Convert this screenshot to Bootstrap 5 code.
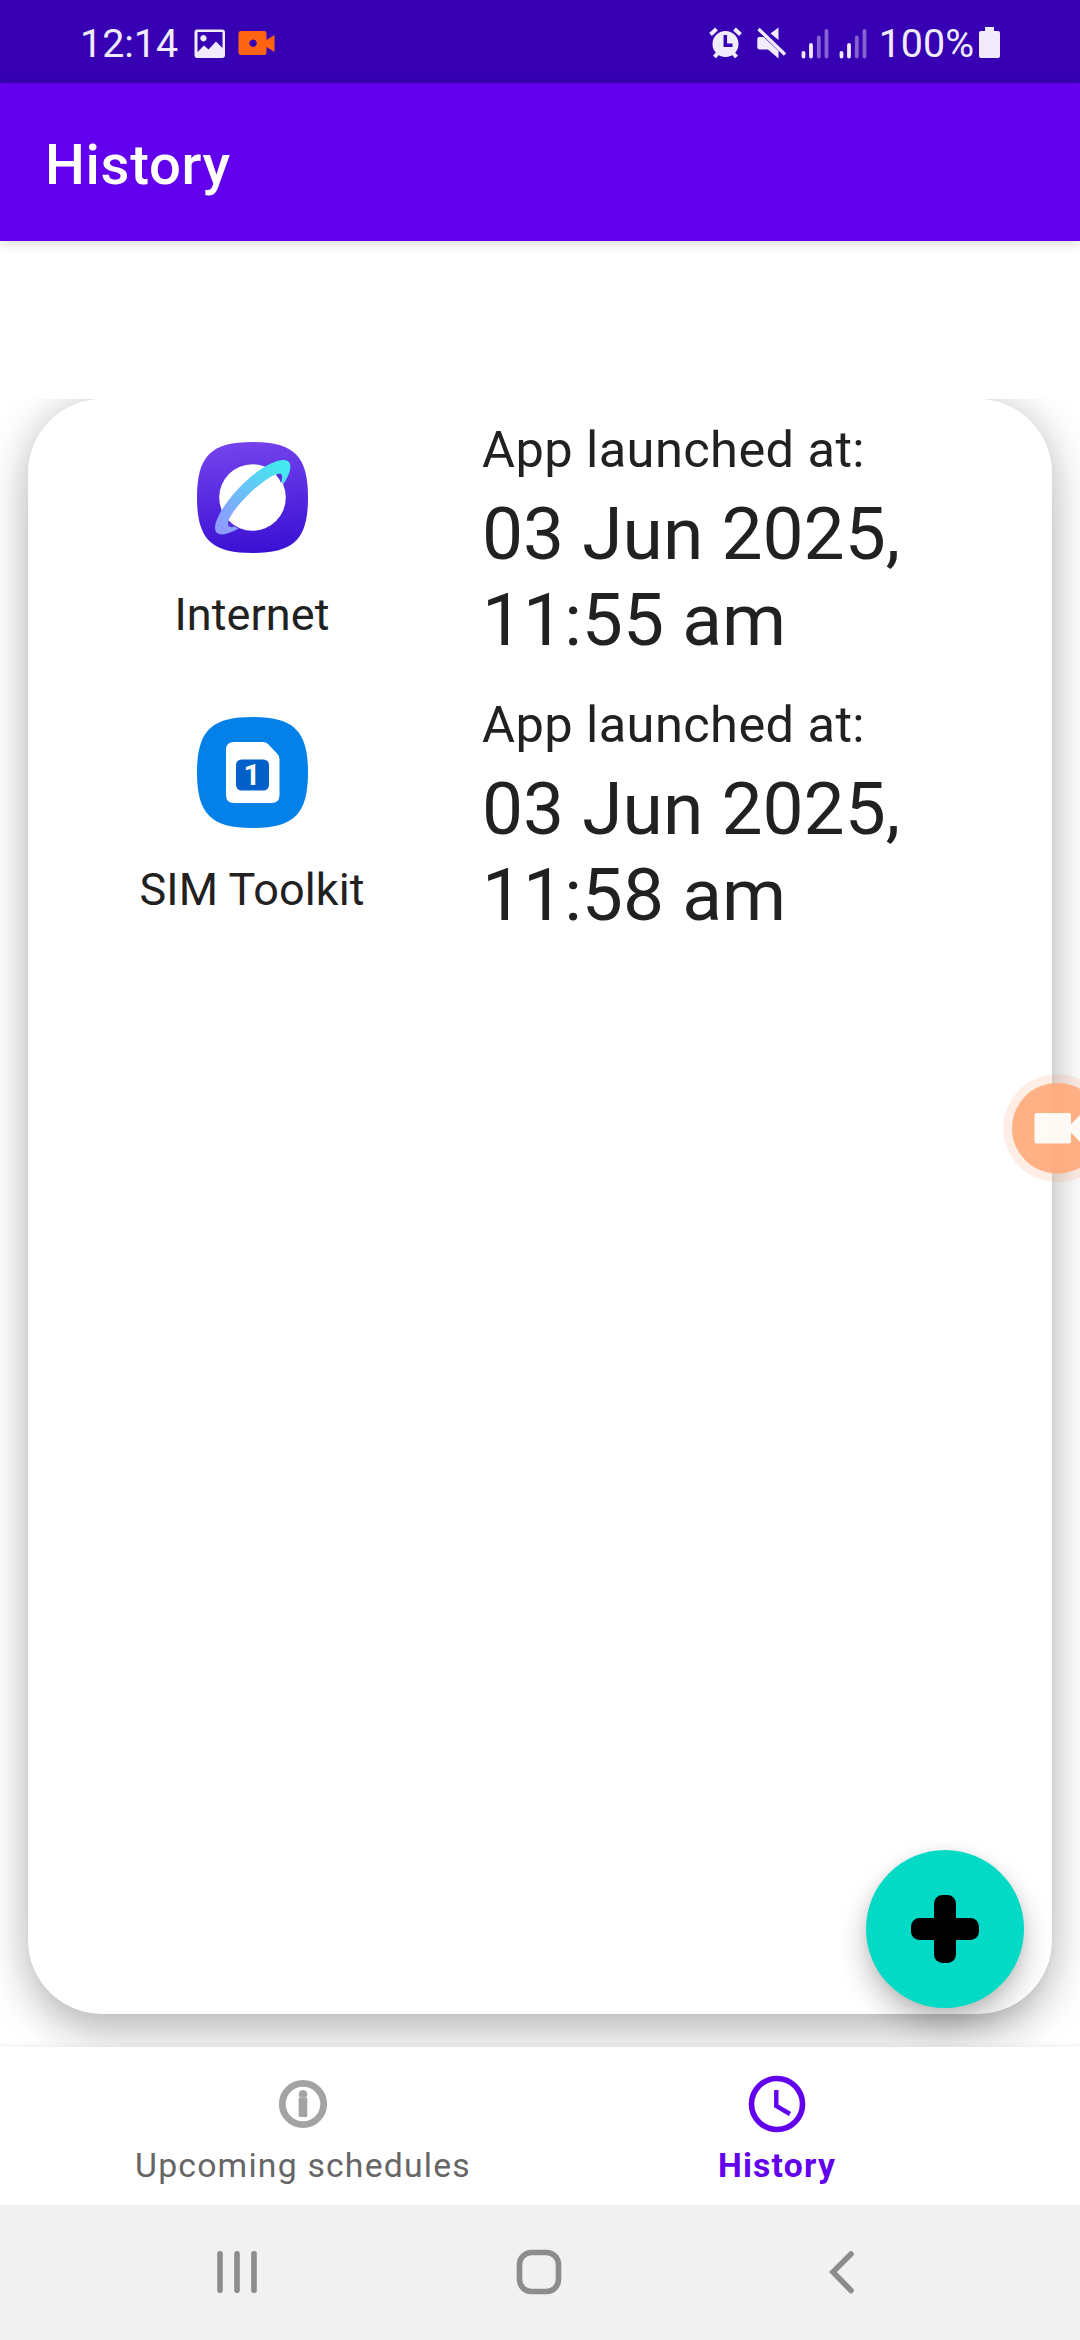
<!DOCTYPE html>
<html lang="en">
<head>
<meta charset="utf-8">
<meta name="viewport" content="width=device-width, initial-scale=1">
<title>History</title>
<link href="https://cdn.jsdelivr.net/npm/bootstrap@5.3.0/dist/css/bootstrap.min.css" rel="stylesheet">
<style>
body{font-family:Roboto,sans-serif;color:#212121;background:#fff}
.screen{width:1080px;height:2340px}
.statusbar{height:83px;background:#3700b3;color:#f1ecfb;padding:5px 79px 0 80px;font-size:39.4px;line-height:78px}
.video-icon{margin-left:11px}
.battery-icon{margin-left:4px}
.signal-icons{margin-right:-3px}
.appbar{height:158px;background:#6200ee;padding:5px 45px 0;box-shadow:0 2px 12px rgba(0,0,0,.16);z-index:2}
.appbar h1{font-size:56.25px;font-weight:500;line-height:66px;letter-spacing:.65px}
.spacer{height:158px}
.stage{height:1648px;padding:0 28px 33px}
.history-card{border-radius:74px;box-shadow:0 28px 44px -4px rgba(0,0,0,.17),0 0 44px rgba(0,0,0,.2)}
.entry{height:275px}
.app-cell{width:448px;padding-top:43px}
.app-name{font-size:45px;line-height:53px;margin-top:35px;letter-spacing:.1px}
.when-label{font-size:50.6px;line-height:59px;padding-top:21px;letter-spacing:.4px}
.when{font-size:73.1px;line-height:86px;margin-top:12px}
.when-cell{width:450px;padding-left:6px}
.fab{right:56px;bottom:39px;width:158px;height:158px;background:#03dac6;box-shadow:0 16px 30px rgba(0,0,0,.24),0 2px 12px rgba(0,0,0,.08)}
.tabs{height:158px;padding:0 66px;background:#fff;z-index:2;box-shadow:0 -2px 6px rgba(0,0,0,.05)}
.tab{width:474px;padding-top:23px;font-size:33.75px;line-height:40px;color:#666;letter-spacing:1.2px}
.tab.active{color:#6200ee;font-weight:700}
.tab span{margin-top:8px}
.sysnav{height:135px;background:#f1f1f1;z-index:3}
.recorder{left:1003px;top:1074px;width:77px;height:109px;z-index:3}
svg{display:block;flex:none}
</style>
</head>
<body>
<div class="screen d-flex flex-column overflow-hidden position-relative">
  <header class="statusbar d-flex align-items-center flex-shrink-0">
    <span>12:14</span>
    <svg class="ms-3" width="32" height="32" viewBox="0 0 32 32"><path fill="#f1ecfb" fill-rule="evenodd" d="M3 1.500H28Q31 1.500 31 4.500V27Q31 30 28 30H3Q.5 30 .5 27V4.500Q.5 1.500 3 1.500ZM3.500 4V24L10 17.500L14.500 21.500L22 13.500L28.500 20V4ZM9.500 7A3.200 3.200 0 1 1 9.400 7Z"/></svg>
    <svg class="video-icon" width="38" height="32" viewBox="0 0 38 32"><path fill="#ff6412" fill-rule="evenodd" d="M4 3H27Q29.500 3 29.500 6V12L37.500 7V24L29.500 19V24Q29.500 27 27 27H4Q1.500 27 1.500 24V6Q1.500 3 4 3ZM16 11.500a3.700 3.700 0 1 0 .1 0Z"/></svg>
    <div class="ms-auto d-flex align-items-center">
      <svg class="signal-icons" width="174" height="34" viewBox="0 0 174 34" fill="#f1ecfb">
        <circle cx="17.500" cy="17" r="13"/><path d="M2.500 7.500L8.500 2M32.500 7.500L26.500 2M6.500 30L10 26M28.500 30L25 26" stroke="#f1ecfb" stroke-width="4"/><path d="M17.300 8V18.300H24.500" fill="none" stroke="#3700b3" stroke-width="3.500"/>
        <path d="M51 10H55.500L70.500 24V31.500L60 22.500H51.500Q49.300 22.500 49.300 20V12Q49.300 10 51 10ZM62.500 6.500L70.500 .5V13Z"/><path d="M50.500 2L77 27.500" stroke="#f1ecfb" stroke-width="3.300"/>
        <g stroke="#f1ecfb" stroke-width="3.800" stroke-linecap="round"><path d="M95.500 26V29.500M103 18V29.500M133.500 26V29.500M141 18V29.500"/><path opacity=".42" d="M110.800 10.500V29.500M118.500 4V29.500M148.800 10.500V29.500M156.500 4V29.500"/></g>
      </svg>
      <span>100%</span>
      <svg class="battery-icon" width="23" height="34" viewBox="0 0 23 34"><path fill="#f1ecfb" d="M7 0H16V4H20Q22 4 22 6V29Q22 31 20 31H3Q1 31 1 29V6Q1 4 3 4H7Z"/></svg>
    </div>
  </header>

  <nav class="appbar navbar flex-shrink-0 position-relative"><h1 class="m-0 text-white">History</h1></nav>
  <div class="spacer flex-shrink-0"></div>

  <main class="stage flex-shrink-0 overflow-hidden position-relative">
    <section class="history-card bg-white h-100">
      <div class="entry d-flex">
        <div class="app-cell d-flex flex-column align-items-center">
          <svg width="111" height="111" viewBox="0 0 111 111">
            <defs><linearGradient id="sky" x1=".45" y1="0" x2=".55" y2="1"><stop stop-color="#7443ed"/><stop offset="1" stop-color="#3a10d3"/></linearGradient><linearGradient id="ring" x1="1" y1="0" x2="0" y2="1"><stop offset=".1" stop-color="#43e9ef"/><stop offset=".9" stop-color="#8d9cff"/></linearGradient></defs>
            <path fill="url(#sky)" d="M55.500 0C97 0 111 14 111 55.500S97 111 55.500 111S0 97 0 55.500S14 0 55.500 0Z"/>
            <circle cx="55.500" cy="55.500" r="33.300" fill="#fff"/>
            <path fill="#5a2fe0" d="M79 33Q83 30 84.500 33Q86 36 84 41Q82 36 79 33ZM32 79Q30 83 32 85Q35 87 40 85Q35 83 32 79Z"/>
            <path fill="url(#ring)" d="M92 20C85 13 62 25 42 46C22 67 14 86 20 91C24 94 32 92 41.500 86.500L37.500 84.500Q33 86 31.500 84C29 80 36 68 50 54C64 40 79 29.500 84 32Q86 34 84.500 38.500L86 42.500C93 33 95 24 92 20Z"/>
          </svg>
          <div class="app-name">Internet</div>
        </div>
        <div class="when-cell"><div class="when-label">App launched at:</div><div class="when">03 Jun 2025, 11:55 am</div></div>
      </div>
      <div class="entry d-flex">
        <div class="app-cell d-flex flex-column align-items-center">
          <svg width="111" height="111" viewBox="0 0 111 111">
            <path fill="#0381e8" d="M55.500 0C97 0 111 14 111 55.500S97 111 55.500 111S0 97 0 55.500S14 0 55.500 0Z"/>
            <path fill="#fff" d="M37 25H66Q69 25 71 27L80.500 37Q82.500 39 82.500 42V78Q82.500 86 74.500 86H37Q29 86 29 78V33Q29 25 37 25Z"/>
            <rect x="39" y="42.500" width="33" height="31" rx="5.500" fill="#0260c8"/>
            <text x="55" y="68" text-anchor="middle" font-family="Roboto,sans-serif" font-weight="700" font-size="29.500" fill="#fff">1</text>
          </svg>
          <div class="app-name">SIM Toolkit</div>
        </div>
        <div class="when-cell"><div class="when-label">App launched at:</div><div class="when">03 Jun 2025, 11:58 am</div></div>
      </div>
    </section>
    <button type="button" aria-label="Add" class="fab btn border-0 rounded-circle p-0 position-absolute d-flex align-items-center justify-content-center">
      <svg width="68" height="68" viewBox="0 0 68 68"><rect x="23" width="22" height="68" rx="8.500"/><rect y="23" width="68" height="22" rx="8.500"/></svg>
    </button>
  </main>

  <nav class="tabs d-flex flex-shrink-0 position-relative">
    <a class="tab text-decoration-none d-flex flex-column align-items-center">
      <svg width="68" height="68" viewBox="0 0 68 68" fill="#a3a3a3"><circle cx="34" cy="34" r="20.700" fill="none" stroke="#a3a3a3" stroke-width="6.800"/><circle cx="34" cy="24.200" r="4.300"/><rect x="29.700" y="27.200" width="8.600" height="19.800" rx="1.500"/><path d="M30.500 27.300H37.500" stroke="#c6c6c6" stroke-width=".8"/></svg>
      <span>Upcoming schedules</span>
    </a>
    <a class="tab active text-decoration-none d-flex flex-column align-items-center">
      <svg width="68" height="68" viewBox="0 0 68 68" fill="none" stroke="#6200ee"><circle cx="34" cy="34" r="25.500" stroke-width="5.600"/><path d="M33.300 20V36L47 44" stroke-width="4.400"/></svg>
      <span>History</span>
    </a>
  </nav>

  <footer class="sysnav d-flex flex-shrink-0 align-items-center position-relative">
    <svg width="1080" height="135" viewBox="0 0 1080 135" fill="none" stroke="#8c8c8c" stroke-linecap="round" stroke-width="5.600">
      <path d="M220 48.800V85.200M237 48.800V85.200M254 48.800V85.200"/>
      <rect x="519.500" y="47.500" width="39" height="39" rx="12"/>
      <path d="M851 49L833 67L851 85.500"/>
    </svg>
  </footer>

  <svg class="recorder position-absolute" viewBox="0 0 77 109">
    <circle cx="54.300" cy="54.200" r="54" fill="#ff6412" fill-opacity=".11"/>
    <circle cx="54.300" cy="54.200" r="45.300" fill="#ffa878" fill-opacity=".88"/>
    <path fill="#fff" fill-opacity=".93" d="M33.500 39H66Q68 39 68 41V50L77 41V68L68 58.500V67.500Q68 69.500 66 69.500H33.500Q31.500 69.500 31.500 67.500V41Q31.500 39 33.500 39Z"/>
  </svg>
</div>
<script src="https://cdn.jsdelivr.net/npm/bootstrap@5.3.0/dist/js/bootstrap.bundle.min.js"></script>
</body>
</html>
